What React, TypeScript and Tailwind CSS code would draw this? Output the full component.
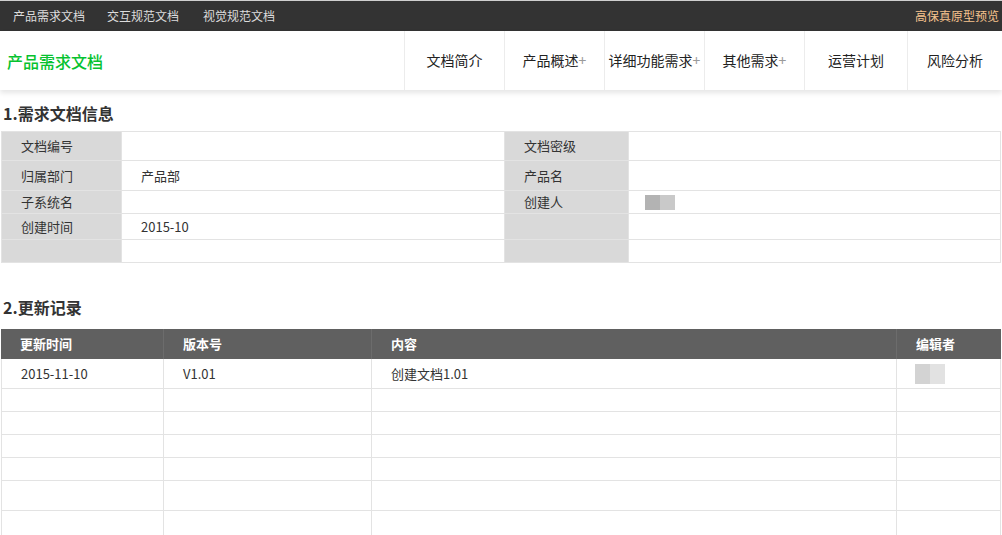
import React from "react";

const font = { fontFamily: '"Noto Sans CJK SC", "Noto Sans", sans-serif' };

const navItems: { label: string; plus?: boolean; w: string }[] = [
  { label: "文档简介", w: "w-[100px]" },
  { label: "产品概述", plus: true, w: "w-[100px]" },
  { label: "详细功能需求", plus: true, w: "w-[100px]" },
  { label: "其他需求", plus: true, w: "w-[100px]" },
  { label: "运营计划", w: "w-[103px]" },
  { label: "风险分析", w: "w-[95px]" },
];

const infoRows: { h: string; l1: string; v1: React.ReactNode; l2: string; v2: React.ReactNode }[] = [
  { h: "h-[29px]", l1: "文档编号", v1: "", l2: "文档密级", v2: "" },
  { h: "h-[30px]", l1: "归属部门", v1: "产品部", l2: "产品名", v2: "" },
  {
    h: "h-[23px]",
    l1: "子系统名",
    v1: "",
    l2: "创建人",
    v2: (
      <span className="flex">
        <span className="block w-[15px] h-[15px] bg-[#b3b3b3]" />
        <span className="block w-[15px] h-[15px] bg-[#c9c9c9]" />
      </span>
    ),
  },
  { h: "h-[26px]", l1: "创建时间", v1: "2015-10", l2: "", v2: "" },
  { h: "h-[23px]", l1: "", v1: "", l2: "", v2: "" },
];

const recRows = ["h-[30px]", "h-[23px]", "h-[23px]", "h-[23px]", "h-[23px]", "h-[30px]", "h-[30px]"];

export default function App() {
  return (
    <div className="w-[1002px] h-[535px] overflow-hidden bg-white text-[#333]" style={font}>
      {/* top bar */}
      <div className="h-[1px] bg-[#cfcfcf]" />
      <div className="h-[30px] bg-[#333333] flex items-center justify-between text-[12px]">
        <div className="flex items-center pl-[13px] text-[#dcdcdc]">
          <span className="mr-[22px]">产品需求文档</span>
          <span className="mr-[24px]">交互规范文档</span>
          <span>视觉规范文档</span>
        </div>
        <span className="pr-[3px] text-[#f7c38e]">高保真原型预览</span>
      </div>

      {/* header */}
      <div className="relative z-10 h-[59px] bg-white flex items-stretch shadow-[0_3px_5px_rgba(0,0,0,0.10)]">
        <div className="flex-1 flex items-center pl-[7px] text-[16px] font-medium text-[#06c22f]">产品需求文档</div>
        <div className="flex items-stretch">
          {navItems.map((n) => (
            <div
              key={n.label}
              className={`${n.w} border-l border-[#ececec] flex items-center justify-center text-[14px] text-[#222]`}
            >
              <span>{n.label}</span>
              {n.plus && <span className="text-[#9a9a9a]">+</span>}
            </div>
          ))}
        </div>
      </div>

      {/* section 1 */}
      <div className="pl-[3px] pt-[12px] pb-[7px] text-[16px] leading-[22px] font-bold text-[#333]">1.需求文档信息</div>
      <div className="ml-[1px] w-[1000px] border-t border-l border-[#e3e3e3] text-[13px]">
        {infoRows.map((r, i) => (
          <div key={i} className={`flex ${r.h} border-b border-[#e3e3e3]`}>
            <div className="w-[120px] bg-[#d9d9d9] border-r border-[#e3e3e3] flex items-center pl-[19px] shrink-0">
              {r.l1}
            </div>
            <div className="w-[383px] border-r border-[#e3e3e3] flex items-center pl-[19px] shrink-0">
              {r.v1}
            </div>
            <div className="w-[124px] bg-[#d9d9d9] border-r border-[#e3e3e3] flex items-center pl-[19px] shrink-0">
              {r.l2}
            </div>
            <div className="flex-1 border-r border-[#e3e3e3] flex items-center pl-[16px]">{r.v2}</div>
          </div>
        ))}
      </div>

      {/* section 2 */}
      <div className="pl-[3px] pt-[33px] pb-[11px] text-[16px] leading-[22px] font-bold text-[#333]">2.更新记录</div>
      <div className="ml-[1px] w-[1000px] text-[13px]">
        <div className="flex h-[30px] bg-[#606060] text-white font-bold">
          <div className="w-[163px] border-r border-[#6c6c6c] flex items-center pl-[19px] shrink-0">更新时间</div>
          <div className="w-[208px] border-r border-[#6c6c6c] flex items-center pl-[19px] shrink-0">版本号</div>
          <div className="w-[525px] border-r border-[#6c6c6c] flex items-center pl-[19px] shrink-0">内容</div>
          <div className="flex-1 flex items-center pl-[19px]">编辑者</div>
        </div>
        {recRows.map((h, i) => (
          <div key={i} className={`flex ${h} border-b border-l border-[#e3e3e3]`}>
            <div className="w-[162px] border-r border-[#e3e3e3] flex items-center pl-[19px] shrink-0">
              {i === 0 ? "2015-11-10" : ""}
            </div>
            <div className="w-[208px] border-r border-[#e3e3e3] flex items-center pl-[19px] shrink-0">
              {i === 0 ? "V1.01" : ""}
            </div>
            <div className="w-[525px] border-r border-[#e3e3e3] flex items-center pl-[19px] shrink-0">
              {i === 0 ? "创建文档1.01" : ""}
            </div>
            <div className="flex-1 border-r border-[#e3e3e3] flex items-center pl-[18px]">
              {i === 0 && (
                <span className="flex blur-[0.5px]">
                  <span className="block w-[15px] h-[20px] bg-[#d3d3d3]" />
                  <span className="block w-[15px] h-[20px] bg-[#e2e2e2]" />
                </span>
              )}
            </div>
          </div>
        ))}
      </div>
    </div>
  );
}
